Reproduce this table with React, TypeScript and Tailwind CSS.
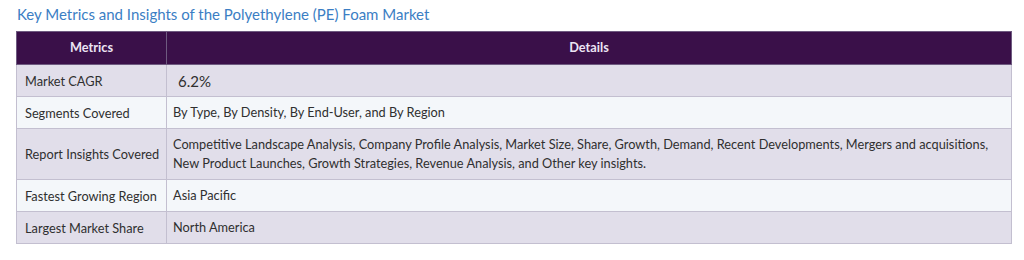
const rows = [
  { metric: 'Market CAGR', detail: '6.2%', big: true },
  { metric: 'Segments Covered', detail: 'By Type, By Density, By End-User, and By Region' },
  {
    metric: 'Report Insights Covered',
    detail:
      'Competitive Landscape Analysis, Company Profile Analysis, Market Size, Share, Growth, Demand, Recent Developments, Mergers and acquisitions, New Product Launches, Growth Strategies, Revenue Analysis, and Other key insights.',
  },
  { metric: 'Fastest Growing Region', detail: 'Asia Pacific' },
  { metric: 'Largest Market Share', detail: 'North America' },
]

export default function App() {
  return (
    <div className="w-[1024px] h-[260px] bg-white pl-4 pt-[4px] font-['Lato','Open_Sans',sans-serif]">
      <h2 className="text-[15px] leading-[20px] text-[#3b7ec4] pl-px mb-[7px]">
        Key Metrics and Insights of the Polyethylene (PE) Foam Market
      </h2>
      <table className="w-[996px] table-fixed border-collapse text-[12.75px] text-[#2f2f2f]">
        <colgroup>
          <col className="w-[150px]" />
          <col />
        </colgroup>
        <thead>
          <tr className="bg-[#3a1049] text-[#ece4f4] h-[33px]">
            <th className="border border-[#6e5a80] font-bold text-center">Metrics</th>
            <th className="border border-[#6e5a80] font-bold text-center">Details</th>
          </tr>
        </thead>
        <tbody>
          {rows.map((r, i) => (
            <tr key={r.metric} className={i % 2 === 0 ? 'bg-[#e1deea]' : 'bg-[#f4f7fa]'}>
              <td className="border border-[#c3bfd0] pl-2 pr-1 h-[32px] leading-[18px] align-middle whitespace-nowrap">
                {r.metric}
              </td>
              <td
                className={
                  r.big
                    ? 'border border-[#c3bfd0] pl-[11px] pr-2 text-[15px] leading-[18px] align-middle'
                    : 'border border-[#c3bfd0] pl-[6px] pr-2 py-[6px] leading-[19px] align-middle'
                }
              >
                {r.detail}
              </td>
            </tr>
          ))}
        </tbody>
      </table>
    </div>
  )
}
